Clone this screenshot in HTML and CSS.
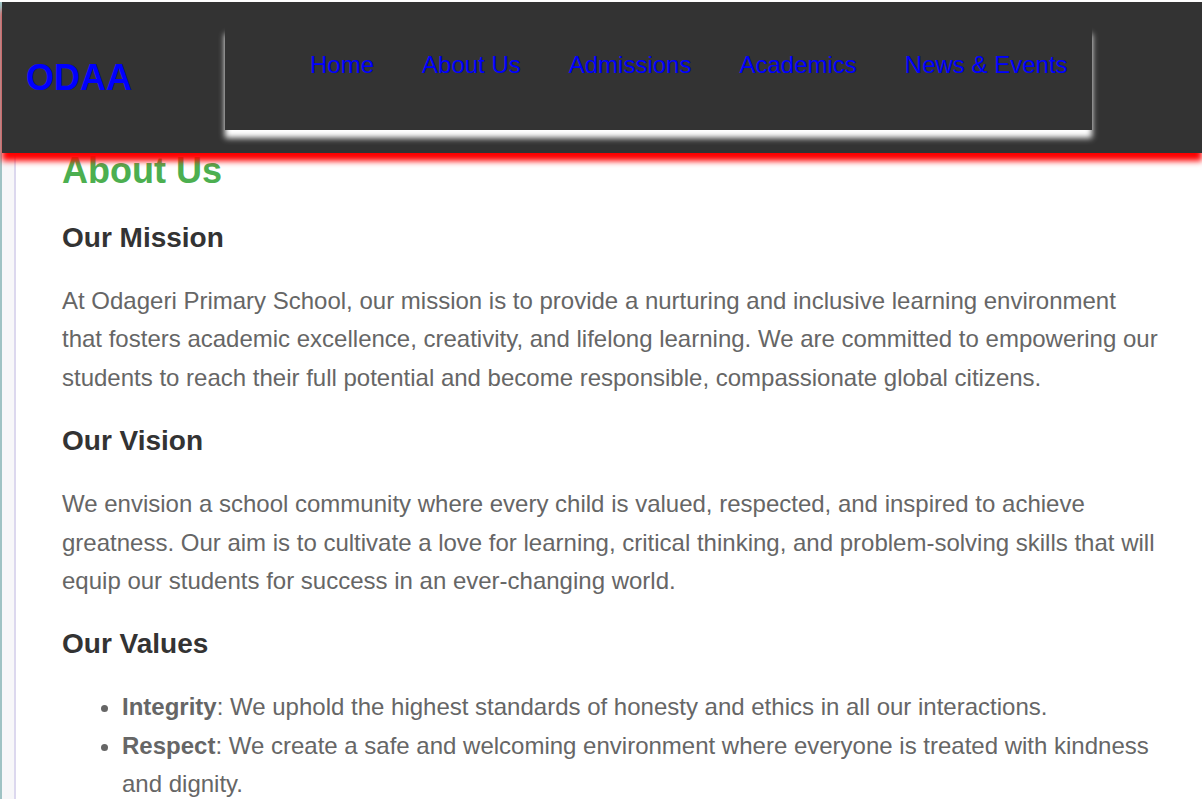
FILE: index.html
```html
<!DOCTYPE html>
<html lang="en">
<head>
<meta charset="utf-8">
<title>ODAA - About Us</title>
<link rel="stylesheet" href="styles.css">
</head>
<body>
<div class="page">
  <header class="site-header">
    <div class="logo">ODAA</div>
    <nav class="main-nav">
      <ul class="nav-list">
        <li><a href="#">Home</a></li>
        <li><a href="#">About Us</a></li>
        <li><a href="#">Admissions</a></li>
        <li><a href="#">Academics</a></li>
        <li><a href="#">News &amp; Events</a></li>
      </ul>
    </nav>
  </header>
  <main class="content">
    <h2 class="page-title">About Us</h2>
    <h3 class="section-title">Our Mission</h3>
    <p class="text">At Odageri Primary School, our mission is to provide a nurturing and inclusive learning environment that fosters academic excellence, creativity, and lifelong learning. We are committed to empowering our students to reach their full potential and become responsible, compassionate global citizens.</p>
    <h3 class="section-title">Our Vision</h3>
    <p class="text">We envision a school community where every child is valued, respected, and inspired to achieve greatness. Our aim is to cultivate a love for learning, critical thinking, and problem-solving skills that will equip our students for success in an ever-changing world.</p>
    <h3 class="section-title">Our Values</h3>
    <ul class="values">
      <li><strong>Integrity</strong>: We uphold the highest standards of honesty and ethics in all our interactions.</li>
      <li><strong>Respect</strong>: We create a safe and welcoming environment where everyone is treated with kindness and dignity.</li>
    </ul>
  </main>
</div>
</body>
</html>
```

FILE: styles.css
```css
html, body {
  margin: 0;
  padding: 0;
}

body {
  background: #ffffff;
  padding-top: 2px;
  font-family: "Liberation Sans", Arial, sans-serif;
  overflow: hidden;
}

.page {
  border-left: 2px solid #9fc3c4;
  background: #f7f7f9;
  min-height: 797px;
}

.site-header {
  position: relative;
  z-index: 2;
  height: 151px;
  background: #333333;
  box-shadow: 0 8px 6px #ff0000;
  display: flex;
  align-items: center;
  padding-left: 24px;
}

.logo {
  font-size: 36px;
  font-weight: bold;
  color: #0000ff;
  width: 199px;
  white-space: nowrap;
}

.main-nav {
  width: 867px;
  height: 104px;
  background: #333333;
  box-shadow: 0 8px 6px #ffffff;
  box-sizing: border-box;
  padding-top: 25px;
}

.nav-list {
  list-style: none;
  margin: 0;
  padding: 0 0 0 61px;
  display: flex;
}

.nav-list li {
  margin: 0 24px;
  white-space: nowrap;
  flex-shrink: 0;
}

.nav-list a {
  font-size: 24px;
  color: #0000ff;
  text-decoration: none;
}

.content {
  position: relative;
  z-index: 1;
  margin-left: 12px;
  border-left: 2px solid #dcd8ee;
  background: #ffffff;
  padding: 0 40px 40px 46px;
  min-height: 700px;
}

.page-title {
  font-size: 36px;
  color: #4caf50;
  margin: -3px 0 30px;
  line-height: normal;
}

.section-title {
  font-size: 28px;
  color: #333333;
  margin: 28px 0;
  line-height: normal;
}

.text {
  font-size: 24px;
  line-height: 1.6;
  color: #666666;
  margin: 24px 0;
}

.values {
  font-size: 24px;
  line-height: 1.6;
  color: #666666;
  margin: 24px 0;
  padding-left: 60px;
}

.values strong {
  color: #666666;
}
```
